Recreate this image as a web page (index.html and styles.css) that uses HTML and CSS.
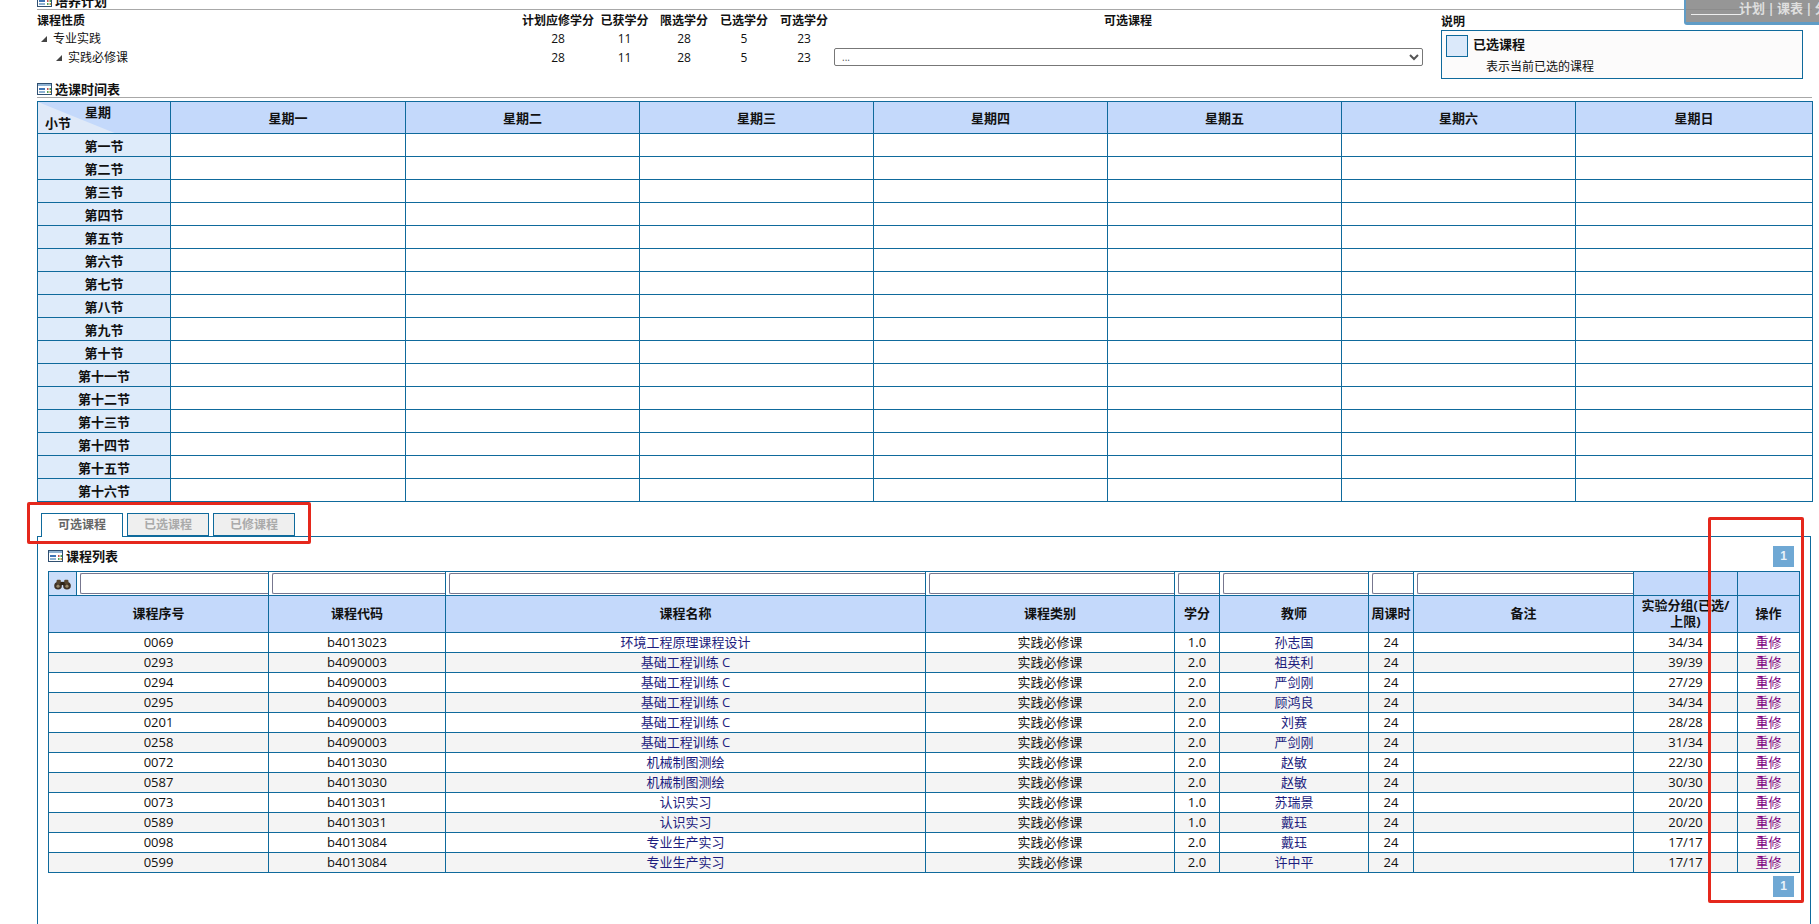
FILE: index.html
```html
<!DOCTYPE html>
<html lang="zh">
<head>
<meta charset="utf-8">
<title>选课</title>
<link rel="stylesheet" href="styles.css">
</head>
<body>
<div class="floatbar"><span class="floatline"></span><span class="floattext">计划 | 课表 | 分</span></div>
<div class="page">
  <h3 class="sect first"><svg class="ico" viewBox="0 0 15 12"><rect x=".5" y=".5" width="14" height="11" fill="#fff" stroke="#2f4f70"/><rect x="1" y="1" width="13" height="2" fill="#8fb2d2"/><rect x="2" y="5" width="6" height="2" fill="#3f74b4"/><rect x="2" y="8" width="6" height="2" fill="#8fb2d2"/><rect x="10" y="5" width="1.5" height="2" fill="#c05050"/><rect x="12.5" y="5" width="1.5" height="2" fill="#50a050"/><rect x="10" y="8" width="1.5" height="2" fill="#50a050"/><rect x="12.5" y="8" width="1.5" height="2" fill="#c0a040"/></svg>培养计划</h3>
  <div class="plan">
    <table class="plantable">
      <colgroup><col class="p0"><col class="p1"><col class="p2"><col class="p3"><col class="p4"><col class="p5"><col class="p6"></colgroup>
      <tr class="planhead"><th class="tl">课程性质</th><th>计划应修学分</th><th>已获学分</th><th>限选学分</th><th>已选学分</th><th>可选学分</th><th class="optcol">可选课程</th></tr>
      <tr><td class="tl"><span class="tree lv1"><svg class="tri" viewBox="0 0 6 6"><polygon points="6,0 6,6 0,6" fill="#444"/></svg>专业实践</span></td><td>28</td><td>11</td><td>28</td><td>5</td><td>23</td><td></td></tr>
      <tr><td class="tl"><span class="tree lv2"><svg class="tri" viewBox="0 0 6 6"><polygon points="6,0 6,6 0,6" fill="#444"/></svg>实践必修课</span></td><td>28</td><td>11</td><td>28</td><td>5</td><td>23</td><td><select class="sel"><option>...</option></select></td></tr>
    </table>
    <div class="legend">
      <div class="legendtitle">说明</div>
      <div class="legendbox">
        <div class="legendrow"><span class="swatch"></span><b class="legendname">已选课程</b></div>
        <div class="legenddesc">表示当前已选的课程</div>
      </div>
    </div>
  </div>
  <h3 class="sect"><svg class="ico" viewBox="0 0 15 12"><rect x=".5" y=".5" width="14" height="11" fill="#fff" stroke="#2f4f70"/><rect x="1" y="1" width="13" height="2" fill="#8fb2d2"/><rect x="2" y="5" width="6" height="2" fill="#3f74b4"/><rect x="2" y="8" width="6" height="2" fill="#8fb2d2"/><rect x="10" y="5" width="1.5" height="2" fill="#c05050"/><rect x="12.5" y="5" width="1.5" height="2" fill="#50a050"/><rect x="10" y="8" width="1.5" height="2" fill="#50a050"/><rect x="12.5" y="8" width="1.5" height="2" fill="#c0a040"/></svg>选课时间表</h3>
  <table class="tt">
    <colgroup><col class="tt0"><col class="ttd1"><col class="ttd"><col class="ttd"><col class="ttd"><col class="ttd"><col class="ttd"><col class="ttl"></colgroup>
    <thead><tr><th class="corner"><span class="c-week">星期</span><span class="c-sec">小节</span></th><th>星期一</th><th>星期二</th><th>星期三</th><th>星期四</th><th>星期五</th><th>星期六</th><th>星期日</th></tr></thead>
    <tbody>
      <tr><th>第一节</th><td></td><td></td><td></td><td></td><td></td><td></td><td></td></tr>
      <tr><th>第二节</th><td></td><td></td><td></td><td></td><td></td><td></td><td></td></tr>
      <tr><th>第三节</th><td></td><td></td><td></td><td></td><td></td><td></td><td></td></tr>
      <tr><th>第四节</th><td></td><td></td><td></td><td></td><td></td><td></td><td></td></tr>
      <tr><th>第五节</th><td></td><td></td><td></td><td></td><td></td><td></td><td></td></tr>
      <tr><th>第六节</th><td></td><td></td><td></td><td></td><td></td><td></td><td></td></tr>
      <tr><th>第七节</th><td></td><td></td><td></td><td></td><td></td><td></td><td></td></tr>
      <tr><th>第八节</th><td></td><td></td><td></td><td></td><td></td><td></td><td></td></tr>
      <tr><th>第九节</th><td></td><td></td><td></td><td></td><td></td><td></td><td></td></tr>
      <tr><th>第十节</th><td></td><td></td><td></td><td></td><td></td><td></td><td></td></tr>
      <tr><th>第十一节</th><td></td><td></td><td></td><td></td><td></td><td></td><td></td></tr>
      <tr><th>第十二节</th><td></td><td></td><td></td><td></td><td></td><td></td><td></td></tr>
      <tr><th>第十三节</th><td></td><td></td><td></td><td></td><td></td><td></td><td></td></tr>
      <tr><th>第十四节</th><td></td><td></td><td></td><td></td><td></td><td></td><td></td></tr>
      <tr><th>第十五节</th><td></td><td></td><td></td><td></td><td></td><td></td><td></td></tr>
      <tr><th>第十六节</th><td></td><td></td><td></td><td></td><td></td><td></td><td></td></tr>
    </tbody>
  </table>
  <div class="tabs">
    <span class="tab on">可选课程</span><span class="tab">已选课程</span><span class="tab">已修课程</span>
    <div class="mark mark-tabs"></div>
  </div>
  <div class="panel">
    <div class="mark mark-col"></div>
    <div class="listhead">
      <h3 class="listtitle"><svg class="ico" viewBox="0 0 15 12"><rect x=".5" y=".5" width="14" height="11" fill="#fff" stroke="#2f4f70"/><rect x="1" y="1" width="13" height="2" fill="#8fb2d2"/><rect x="2" y="5" width="6" height="2" fill="#3f74b4"/><rect x="2" y="8" width="6" height="2" fill="#8fb2d2"/><rect x="10" y="5" width="1.5" height="2" fill="#c05050"/><rect x="12.5" y="5" width="1.5" height="2" fill="#50a050"/><rect x="10" y="8" width="1.5" height="2" fill="#50a050"/><rect x="12.5" y="8" width="1.5" height="2" fill="#c0a040"/></svg>课程列表</h3>
      <span class="pager">1</span>
    </div>
    <table class="grid">
      <colgroup><col class="g0"><col class="g1"><col class="g2"><col class="g3"><col class="g4"><col class="g5"><col class="g6"><col class="g7"><col class="g8"><col class="g9"><col class="g10"></colgroup>
      <thead>
        <tr class="filter">
          <th class="bino"><svg viewBox="0 0 16 10" class="binoico"><circle cx="3.8" cy="6.2" r="3.6" fill="#3f3226"/><circle cx="12.2" cy="6.2" r="3.6" fill="#3f3226"/><rect x="2.4" y="0.6" width="4" height="4" rx="1" fill="#56452f"/><rect x="9.6" y="0.6" width="4" height="4" rx="1" fill="#56452f"/><rect x="6" y="2.5" width="4" height="3" fill="#2e2419"/><circle cx="3.8" cy="6.6" r="1.5" fill="#9a8a6c"/><circle cx="12.2" cy="6.6" r="1.5" fill="#9a8a6c"/></svg></th>
          <td class="fc"><input class="fi"></td><td class="fc"><input class="fi"></td><td class="fc"><input class="fi"></td><td class="fc"><input class="fi"></td><td class="fc"><input class="fi"></td><td class="fc"><input class="fi"></td><td class="fc"><input class="fi"></td><td class="fc"><input class="fi"></td>
          <td class="fe"></td><td class="fe"></td>
        </tr>
        <tr class="ghead"><th colspan="2">课程序号</th><th>课程代码</th><th>课程名称</th><th>课程类别</th><th>学分</th><th>教师</th><th>周课时</th><th>备注</th><th>实验分组(已选/<br>上限)</th><th>操作</th></tr>
      </thead>
      <tbody>
        <tr><td colspan="2">0069</td><td>b4013023</td><td><a class="lk">环境工程原理课程设计</a></td><td>实践必修课</td><td>1.0</td><td><a class="lk">孙志国</a></td><td>24</td><td></td><td>34/34</td><td><a class="act">重修</a></td></tr>
        <tr><td colspan="2">0293</td><td>b4090003</td><td><a class="lk">基础工程训练 C</a></td><td>实践必修课</td><td>2.0</td><td><a class="lk">祖英利</a></td><td>24</td><td></td><td>39/39</td><td><a class="act">重修</a></td></tr>
        <tr><td colspan="2">0294</td><td>b4090003</td><td><a class="lk">基础工程训练 C</a></td><td>实践必修课</td><td>2.0</td><td><a class="lk">严剑刚</a></td><td>24</td><td></td><td>27/29</td><td><a class="act">重修</a></td></tr>
        <tr><td colspan="2">0295</td><td>b4090003</td><td><a class="lk">基础工程训练 C</a></td><td>实践必修课</td><td>2.0</td><td><a class="lk">顾鸿良</a></td><td>24</td><td></td><td>34/34</td><td><a class="act">重修</a></td></tr>
        <tr><td colspan="2">0201</td><td>b4090003</td><td><a class="lk">基础工程训练 C</a></td><td>实践必修课</td><td>2.0</td><td><a class="lk">刘赛</a></td><td>24</td><td></td><td>28/28</td><td><a class="act">重修</a></td></tr>
        <tr><td colspan="2">0258</td><td>b4090003</td><td><a class="lk">基础工程训练 C</a></td><td>实践必修课</td><td>2.0</td><td><a class="lk">严剑刚</a></td><td>24</td><td></td><td>31/34</td><td><a class="act">重修</a></td></tr>
        <tr><td colspan="2">0072</td><td>b4013030</td><td><a class="lk">机械制图测绘</a></td><td>实践必修课</td><td>2.0</td><td><a class="lk">赵敏</a></td><td>24</td><td></td><td>22/30</td><td><a class="act">重修</a></td></tr>
        <tr><td colspan="2">0587</td><td>b4013030</td><td><a class="lk">机械制图测绘</a></td><td>实践必修课</td><td>2.0</td><td><a class="lk">赵敏</a></td><td>24</td><td></td><td>30/30</td><td><a class="act">重修</a></td></tr>
        <tr><td colspan="2">0073</td><td>b4013031</td><td><a class="lk">认识实习</a></td><td>实践必修课</td><td>1.0</td><td><a class="lk">苏瑞景</a></td><td>24</td><td></td><td>20/20</td><td><a class="act">重修</a></td></tr>
        <tr><td colspan="2">0589</td><td>b4013031</td><td><a class="lk">认识实习</a></td><td>实践必修课</td><td>1.0</td><td><a class="lk">戴珏</a></td><td>24</td><td></td><td>20/20</td><td><a class="act">重修</a></td></tr>
        <tr><td colspan="2">0098</td><td>b4013084</td><td><a class="lk">专业生产实习</a></td><td>实践必修课</td><td>2.0</td><td><a class="lk">戴珏</a></td><td>24</td><td></td><td>17/17</td><td><a class="act">重修</a></td></tr>
        <tr><td colspan="2">0599</td><td>b4013084</td><td><a class="lk">专业生产实习</a></td><td>实践必修课</td><td>2.0</td><td><a class="lk">许中平</a></td><td>24</td><td></td><td>17/17</td><td><a class="act">重修</a></td></tr>
      </tbody>
    </table>
    <div class="pagerrow"><span class="pager">1</span></div>
  </div>
</div>
</body>
</html>
```
FILE: styles.css
```css
* { box-sizing: border-box; }
html, body { margin: 0; padding: 0; height: 924px; overflow: hidden; background: #fff; }
body { font-family: "Open Sans", "Noto Sans CJK SC", sans-serif; font-size: 13px; color: #111; position: relative; }
.page { width: 1819px; height: 924px; padding: 0 7px 0 37px; overflow: hidden; }
table { border-collapse: collapse; table-layout: fixed; }
th, td { padding: 0; font-size: 13px; text-align: center; }

.floatbar { position: absolute; top: 0; right: 0; width: 135px; height: 25px; background: rgba(135, 135, 135, .88); border-left: 2px solid #5f9cc6; border-bottom: 3px solid #5f9cc6; border-radius: 0 0 0 3px; z-index: 5; overflow: hidden; white-space: nowrap; }
.floatline { position: absolute; left: 5px; top: 14px; width: 50px; height: 1px; background: #eee; }
.floattext { position: absolute; left: 53px; top: 0; font-weight: 700; font-size: 13px; line-height: 17px; color: #dedede; word-spacing: -1px; }

.sect { margin: 0; height: 14px; padding-bottom: 4px; line-height: 14px; font-size: 13px; font-weight: 700; border-bottom: 1px solid #a8a8a8; display: flex; align-items: center; width: 1775px; color: #111; }
.sect.first { margin-top: -4px; }
.ico { width: 15px; height: 12px; margin-right: 3px; flex: none; }

.plan { display: flex; height: 74px; width: 1775px; }
.plantable { width: 1394px; margin-top: 3px; align-self: flex-start; }
.plantable td, .plantable th { font-size: 12px; height: 19px; line-height: 16px; font-weight: 400; vertical-align: middle; }
.plantable th { font-weight: 700; height: 16px; }
.plantable .optcol { padding-right: 10px; }
.p0 { width: 483px; } .p1 { width: 76px; } .p2 { width: 57px; } .p3 { width: 62px; } .p4 { width: 58px; } .p5 { width: 62px; } .p6 { width: 596px; }
.tl { text-align: left !important; }
.tree { display: inline-flex; align-items: center; }
.lv1 { padding-left: 4px; }
.lv2 { padding-left: 19px; }
.tri { width: 6px; height: 6px; margin-right: 6px; }
.sel { width: 589px; height: 18px; margin: -1px 0 0 -1px; padding: 0 0 0 3px; font-size: 10px; color: #555; background: #fff; border: 1px solid #777; border-radius: 2px; font-family: "Open Sans", sans-serif; display: block; }

.legend { margin-left: 10px; padding-top: 4px; width: 362px; }
.legendtitle { font-size: 12px; font-weight: 700; line-height: 15px; margin-bottom: 1px; }
.legendbox { width: 362px; height: 49px; border: 1px solid #0f6a9c; background: #fcfbfb; padding: 4px 4px 0; }
.legendrow { display: flex; align-items: center; height: 22px; gap: 5px; font-size: 13px; }
.legendname { margin-bottom: 6px; }
.swatch { width: 22px; height: 22px; background: #dbe9fa; border: 1px solid #0f6a9c; }
.legenddesc { padding-left: 40px; font-size: 12px; line-height: 18px; margin-top: 1px; }

.tt { width: 1775px; margin-top: 3px; color: #111; }
.tt th, .tt td { border: 1px solid #0f6a9c; }
.tt0 { width: 133px; } .ttd1 { width: 235px; } .ttd { width: 234px; } .ttl { width: 237px; }
.tt thead th { height: 32px; background: #c4d9fb; font-weight: 700; }
.tt tbody th { height: 23px; background: #deebfa; font-weight: 700; }
.tt tbody td { background: #fff; }
.tt .corner { position: relative; }
.tt .corner::before { content: ""; position: absolute; left: 0; top: 0; right: 0; bottom: 0; background: #dfe9f8; clip-path: polygon(0 0, 58% 100%, 0 100%); }
.c-week { position: absolute; left: 47px; top: 2px; line-height: 17px; }
.c-sec { position: absolute; left: 7px; top: 13px; line-height: 17px; }

.tabs { position: relative; height: 34px; padding: 11px 0 0 4px; display: flex; gap: 4px; align-items: flex-end; }
.tab { width: 82px; height: 23px; line-height: 22px; text-align: center; font-size: 12px; font-weight: 700; color: #aaa; background: #efefef; border: 1px solid #0f6a9c; }
.tab.on { height: 24px; color: #666; background: #fff; border-bottom: 0; position: relative; z-index: 2; margin-bottom: -1px; }
.mark { position: absolute; border: 3px solid #e5281c; border-radius: 2px; z-index: 6; pointer-events: none; }
.mark-tabs { left: -10px; top: 0; width: 284px; height: 42px; }

.panel { position: relative; width: 1774px; height: 420px; border: 1px solid #0f6a9c; padding: 0 0 0 10px; }
.mark-col { left: 1670px; top: -20px; width: 96px; height: 386px; }
.listhead { display: flex; justify-content: space-between; align-items: center; height: 34px; width: 1746px; padding-top: 4px; }
.listtitle { margin: 0; font-size: 13px; line-height: 16px; font-weight: 700; display: flex; align-items: center; color: #111; }
.pager { width: 21px; height: 21px; background: #6fa8d4; color: #e8f2fa; font-size: 12px; font-weight: 700; line-height: 21px; text-align: center; display: block; font-family: "Liberation Sans", sans-serif; }

.grid { width: 1751px; }
.grid th, .grid td { border: 1px solid #0f6a9c; line-height: 16px; }
.g0 { width: 28px; } .g1 { width: 192px; } .g2 { width: 177px; } .g3 { width: 480px; } .g4 { width: 249px; } .g5 { width: 45px; } .g6 { width: 149px; } .g7 { width: 45px; } .g8 { width: 220px; } .g9 { width: 104px; } .g10 { width: 62px; }
.filter th, .filter td { height: 24px; background: #c4d9fb; }
.filter .fc { background: #fff; padding: 1px 0 1px 3px; }
.filter .bino { background: #cbdefa; }
.binoico { width: 17px; height: 11px; display: block; margin: 2px auto 0; }
.fi { display: block; width: 100%; height: 21px; background: #fff; border: 1px solid #77778f; border-width: 1px 0 1px 1px; border-radius: 2px 0 0 2px; padding: 0; }
.ghead th { height: 37px; padding-bottom: 2px; background: #c4d9fb; font-weight: 700; }
.grid tbody td { height: 20px; padding-bottom: 2px; background: #fff; }
.grid tbody tr:nth-child(even) td { background: #f4f4f4; }
.lk { color: #1d1d7e; }
.act { color: #800080; }
.pagerrow { width: 1746px; display: flex; justify-content: flex-end; padding-top: 3px; }
```
